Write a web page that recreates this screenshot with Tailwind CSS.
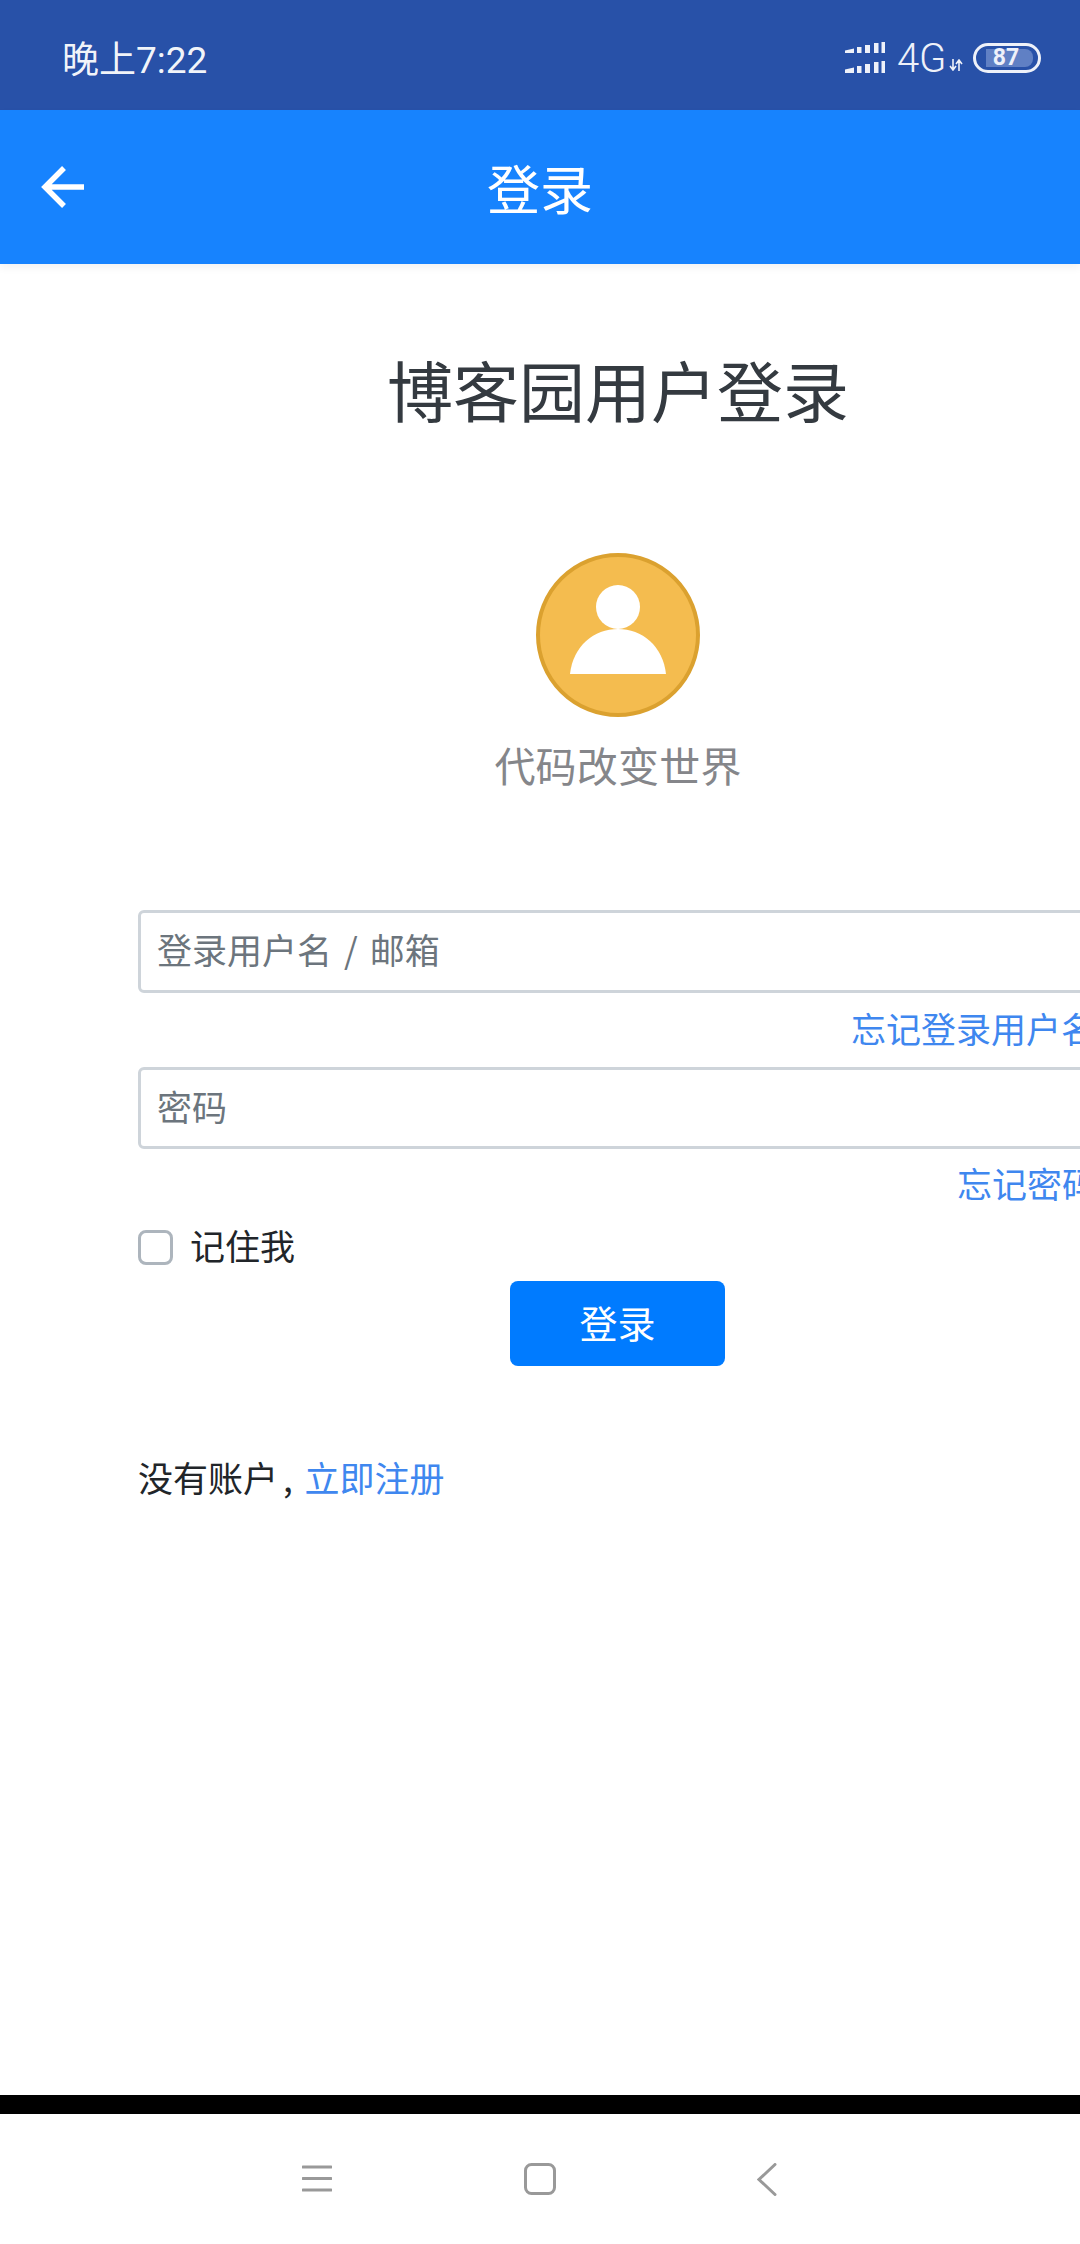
<!DOCTYPE html>
<html lang="zh-CN">
<head>
<meta charset="utf-8">
<script src="https://cdn.jsdelivr.net/npm/@tailwindcss/browser@4"></script>
<title>登录</title>
</head>
<body class="m-0">
<div class="w-[1080px] h-[2244px] overflow-hidden flex flex-col bg-white font-['Noto_Sans_CJK_SC','Noto_Sans',sans-serif]">
  <div class="h-[110px] shrink-0 bg-[#2851a8] flex items-center justify-between pl-[62px] pr-[39px] text-white/95">
    <span class="text-[37px] leading-[40px] font-['Roboto','Noto_Sans_CJK_SC',sans-serif] mt-[11px]">晚上7:22</span>
    <div class="flex items-center mt-[5px]">
      <svg width="42" height="32" viewBox="0 0 42 32" fill="#eef1f9"><path d="M1 8.500 10 6.500V11H1zM13 5h4.500v6H13zM21 3h5v8h-5zM30 1h4.500v10H30zM37.500 0H41v11h-3.500zM1 27.500 10 25.500V31H1zM13 24h4.500v7H13zM21 22h5v9h-5zM30 20h4.500v11H30zM37.500 19H41v12h-3.500z"/></svg>
      <span class="ml-[11px] mt-[2px] text-[40px] leading-[36px] font-['Roboto',sans-serif] font-light text-[#eef1f9] tracking-[-0.3px]">4G</span>
      <svg class="ml-[3px] mt-[14px]" width="14" height="12" viewBox="0 0 14 12" fill="none" stroke="#eef1f9" stroke-width="1.600"><path d="M4 0V10M1 7l3 4 3-4M10 12V2M7 5l3-4 3 4"/></svg>
      <div class="ml-[10px] w-[68px] h-[30px] rounded-[15px] border-[3px] border-[#eef1f9] flex items-center pl-[10px] box-border">
        <div class="w-[47px] h-[18px] rounded-r-[8px] bg-[#6080c4] flex items-center justify-center text-[23px] leading-[18px] font-bold font-['Roboto',sans-serif] text-[#eef1f9] pr-[7px]">87</div>
      </div>
    </div>
  </div>

  <header class="h-[154px] shrink-0 bg-[#1783fe] relative flex items-center justify-center shadow-[0_4px_8px_rgba(0,0,0,0.05)]">
    <svg class="absolute left-[40px] top-[55px]" width="46" height="44" viewBox="0 0 46 44" fill="none" stroke="#fff" stroke-width="5.500"><path d="M24 3 5 22l19 19M5 22h39"/></svg>
    <h1 class="text-[53px] leading-[60px] text-white font-normal mt-[-1px]">登录</h1>
  </header>

  <main class="flex-1 w-[960px] ml-[138px] flex flex-col">
    <h2 class="mt-[85px] text-center text-[66px] leading-[78px] font-normal text-[#343a40]">博客园用户登录</h2>
    <div class="mt-[126px] flex flex-col items-center">
      <div class="w-[164px] h-[164px] rounded-full border-[4px] border-[#dba12f] bg-[#f4bc4f] box-border">
        <svg width="156" height="156" viewBox="0 0 156 156" fill="#fff"><circle cx="78" cy="50" r="22"/><path d="M30 117C33 89 54 72 78 72s45 17 48 45z"/></svg>
      </div>
      <p class="mt-[23px] text-[41px] leading-[48px] text-[#85868a] tracking-[0.2px]">代码改变世界</p>
    </div>

    <div class="mt-[122px] h-[83px] rounded-[6px] border-[3px] border-[#ced4da] flex items-center pl-[16px] pb-[5px] text-[35px] leading-[42px] text-[#6c757d]"><span>登录用户名<span class="mx-[12px]">/</span>邮箱</span></div>
    <a class="mt-[14px] mr-[2px] text-right text-[35px] leading-[42px] text-[#3f87ef]">忘记登录用户名</a>
    <div class="mt-[18px] h-[82px] rounded-[6px] border-[3px] border-[#ced4da] flex items-center pl-[16px] pb-[5px] text-[35px] leading-[42px] text-[#6c757d]">密码</div>
    <a class="mt-[13px] mr-[1px] text-right text-[35px] leading-[42px] text-[#3f87ef]">忘记密码</a>

    <label class="mt-[22px] flex items-center h-[42px]">
      <span class="w-[35px] h-[35px] rounded-[8px] border-[3px] border-[#adb5bd] bg-white box-border"></span>
      <span class="ml-[17px] mt-[-4px] text-[35px] leading-[42px] text-[#212529]">记住我</span>
    </label>
    <button class="mt-[13px] self-center w-[215px] h-[85px] ml-[-1px] rounded-[8px] bg-[#007bff] text-white text-[38px] leading-[44px] pb-[4px]">登录</button>
    <p class="mt-[90px] text-[35px] leading-[42px] text-[#212529]">没有账户<span class="ml-[5px] mr-[4px]">,</span> <a class="text-[#3f87ef]">立即注册</a></p>
  </main>

  <div class="h-[19px] shrink-0 bg-black"></div>
  <nav class="h-[130px] shrink-0 bg-white relative flex items-center justify-center">
    <svg class="absolute left-[302px] top-[51px]" width="30" height="27" viewBox="0 0 30 27" fill="none" stroke="#999" stroke-width="3" stroke-linecap="round"><path d="M1 2h28M1 13.500h28M1 25h28"/></svg>
    <svg class="absolute left-[524px] top-[49px]" width="32" height="32" viewBox="0 0 32 32" fill="none" stroke="#999" stroke-width="3"><rect x="1.500" y="1.500" width="29" height="29" rx="6"/></svg>
    <svg class="absolute left-[757px] top-[49px]" width="20" height="33" viewBox="0 0 20 33" fill="none" stroke="#999" stroke-width="3" stroke-linecap="round"><path d="M18 1.500 2 16.500l16 15"/></svg>
  </nav>
</div>
</body>
</html>
